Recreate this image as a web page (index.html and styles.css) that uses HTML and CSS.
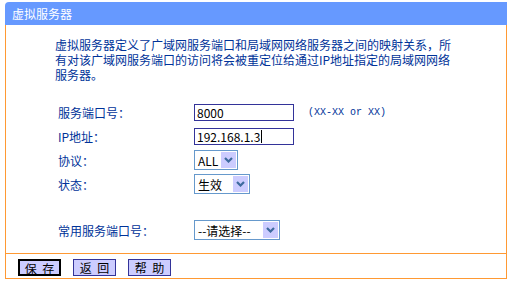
FILE: index.html
```html
<!DOCTYPE html>
<html lang="zh-CN">
<head>
    <meta charset="UTF-8">
    <title>虚拟服务器</title>
    <link rel="stylesheet" href="styles.css">
</head>
<body>
    <div class="panel">
        <div class="panel-title">虚拟服务器</div>

        <div class="panel-body">
            <p class="intro">虚拟服务器定义了广域网服务端口和局域网网络服务器之间的映射关系，所有对该广域网服务端口的访问将会被重定位给通过IP地址指定的局域网网络服务器。</p>

            <div class="form">
                <div class="row">
                    <label>服务端口号：</label>
                    <span class="field">8000</span>
                    <span class="hint">(XX-XX or XX)</span>
                </div>
                <div class="row">
                    <label>IP地址：</label>
                    <span class="field">192.168.1.3<span class="caret"></span></span>
                </div>
                <div class="row">
                    <label>协议：</label>
                    <span class="select sel-proto">
                        <span class="sel-text">ALL</span>
                        <span class="sel-btn"><svg width="9" height="6" viewBox="0 0 9 6"><path d="M1 1 L4.5 4.5 L8 1" fill="none" stroke="#3d6a9e" stroke-width="2.2"/></svg></span>
                    </span>
                </div>
                <div class="row">
                    <label>状态：</label>
                    <span class="select sel-state">
                        <span class="sel-text">生效</span>
                        <span class="sel-btn"><svg width="9" height="6" viewBox="0 0 9 6"><path d="M1 1 L4.5 4.5 L8 1" fill="none" stroke="#3d6a9e" stroke-width="2.2"/></svg></span>
                    </span>
                </div>
                <div class="row row-gap">
                    <label>常用服务端口号：</label>
                    <span class="select sel-common">
                        <span class="sel-text">--请选择--</span>
                        <span class="sel-btn"><svg width="9" height="6" viewBox="0 0 9 6"><path d="M1 1 L4.5 4.5 L8 1" fill="none" stroke="#3d6a9e" stroke-width="2.2"/></svg></span>
                    </span>
                </div>
            </div>
        </div>

        <div class="panel-foot">
            <button class="btn btn-default">保 存</button>
            <button class="btn">返 回</button>
            <button class="btn">帮 助</button>
        </div>
    </div>
</body>
</html>
```

FILE: styles.css
```css
body {
    margin: 0;
    padding: 0;
    background-color: #fff;
    font-family: "Noto Sans CJK SC", "Noto Sans", sans-serif;
    font-size: 12px;
}

.panel {
    width: 502px;
    margin: 2px 0 0 5px;
}

.panel-title {
    height: 23px;
    line-height: 23px;
    padding-left: 7px;
    background-color: #6699ff;
    color: #fff;
    border-top-left-radius: 4px;
}

.panel-body {
    border-left: 1px solid #ff9933;
    border-right: 1px solid #ff9933;
    padding: 12px 0 11px 0;
}

.intro {
    width: 400px;
    margin: 0 0 0 49px;
    line-height: 15px;
    color: #003399;
}

.form {
    margin-top: 18px;
    padding-left: 52px;
}

.row {
    display: flex;
    align-items: center;
    height: 24px;
}

.row-gap {
    margin-top: 22px;
}

.row label {
    width: 136px;
    color: #003399;
    line-height: 15px;
}

.field {
    box-sizing: border-box;
    display: flex;
    align-items: center;
    width: 100px;
    height: 17px;
    padding: 0 2px;
    border: 1px solid #333399;
    color: #000;
    line-height: 15px;
}

.caret {
    display: inline-block;
    width: 1px;
    height: 13px;
    margin-left: 1px;
    background-color: #000;
}

.hint {
    margin-left: 14px;
    font-family: "Liberation Mono", monospace;
    font-size: 10px;
    color: #003399;
}

.select {
    box-sizing: border-box;
    display: flex;
    align-items: center;
    justify-content: space-between;
    height: 20px;
    padding-left: 3px;
    border: 1px solid #6699cc;
    color: #000;
}

.sel-proto {
    width: 44px;
}

.sel-state {
    width: 56px;
}

.sel-common {
    width: 86px;
}

.sel-text {
    line-height: 15px;
    white-space: nowrap;
}

.sel-btn {
    display: flex;
    align-items: center;
    justify-content: center;
    width: 15px;
    height: 16px;
    margin-right: 1px;
    background-color: #ccccff;
}

.panel-foot {
    display: flex;
    gap: 12px;
    height: 26px;
    padding: 5px 0 0 12px;
    box-sizing: border-box;
    border: 1px solid #ff9933;
}

.btn {
    box-sizing: border-box;
    width: 43px;
    height: 17px;
    padding: 0;
    font-family: "Noto Sans CJK SC", sans-serif;
    font-size: 12px;
    line-height: 15px;
    word-spacing: 3px;
    color: #000;
    background-color: #ccccff;
    border: 1px solid #333399;
}

.btn-default {
    border: 2px solid #000;
}
```
